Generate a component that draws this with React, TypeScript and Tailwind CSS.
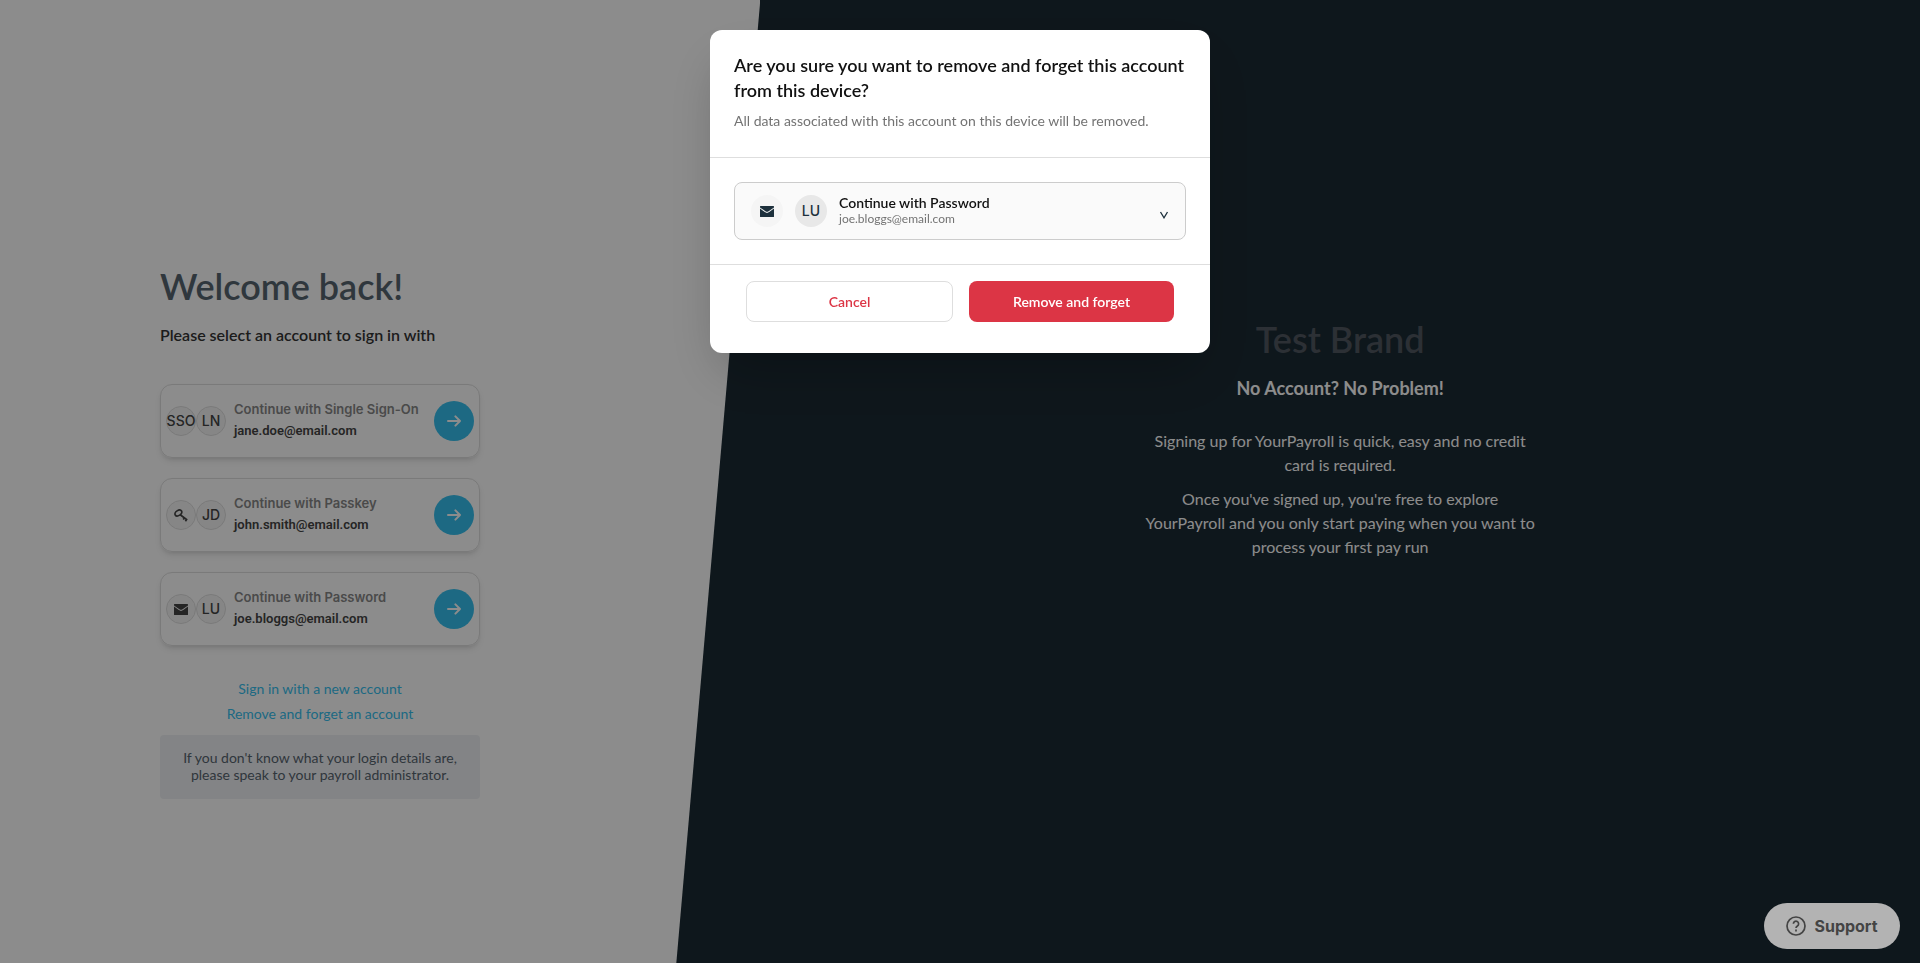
import { useState } from 'react';

const ACCOUNTS = [
    { method: 'Single Sign-On', badge: 'SSO', initials: 'LN', email: 'jane.doe@email.com' },
    { method: 'Passkey', badge: 'key', initials: 'JD', email: 'john.smith@email.com' },
    { method: 'Password', badge: 'mail', initials: 'LU', email: 'joe.bloggs@email.com' },
];

function MailIcon() {
    return (
        <svg viewBox="0 0 14 11" className="w-3.5" fill="currentColor" aria-hidden="true">
            <path d="M.6 0h12.8a.6.6 0 0 1 .6.6v.8L8.6 5.2a2.8 2.8 0 0 1-3.2 0L0 1.4V.6A.6.6 0 0 1 .6 0Z" />
            <path d="m0 2.6 4.8 3.5a3.7 3.7 0 0 0 4.4 0L14 2.6v7.8a.6.6 0 0 1-.6.6H.6a.6.6 0 0 1-.6-.6Z" />
        </svg>
    );
}

function KeyIcon() {
    return (
        <svg viewBox="0 0 14 13" className="w-3.5" fill="none" stroke="currentColor" strokeWidth="1.7" aria-hidden="true">
            <ellipse cx="4.4" cy="4" rx="3.7" ry="2.5" transform="rotate(-32 4.4 4)" />
            <path d="m6.2 5.8 7 5.2M9.2 10.4l1.4-2M11.4 12.2l1.4-2" />
        </svg>
    );
}

function ArrowIcon() {
    return (
        <svg viewBox="0 0 14 12" className="w-3.5" fill="none" stroke="currentColor" strokeWidth="2" strokeLinecap="round" strokeLinejoin="round" aria-hidden="true">
            <path d="M1 6h12M8.4 1.4 13 6l-4.6 4.6" />
        </svg>
    );
}

function Badge({ name }: { name: string }) {
    if (name === 'key') return <KeyIcon />;
    if (name === 'mail') return <MailIcon />;
    return <>{name}</>;
}

function AccountCard({ account }: { account: (typeof ACCOUNTS)[number] }) {
    return (
        <li className="flex h-[74px] items-center rounded-xl border border-[#dedede] px-[5px] font-[Inter] shadow-md">
            <span className="flex size-[30px] shrink-0 items-center justify-center rounded-full border border-[#dedede] bg-[#f5f5f5] text-sm font-medium text-[#444]">
                <Badge name={account.badge} />
            </span>
            <span className="flex size-[30px] shrink-0 items-center justify-center rounded-full border border-[#dedede] bg-[#f5f5f5] text-sm font-medium text-[#444]">
                {account.initials}
            </span>
            <div className="ml-2 flex-1 pb-0.5 font-semibold whitespace-nowrap">
                <p className="text-[13px] leading-[21px] text-[#888]">Continue with {account.method}</p>
                <p className="font-[Roboto] text-[13px] leading-[21px] text-[#444]">{account.email}</p>
            </div>
            <button
                type="button"
                aria-label={`Sign in as ${account.email}`}
                className="flex size-10 shrink-0 items-center justify-center rounded-full bg-[#36c0ee] text-white"
            >
                <ArrowIcon />
            </button>
        </li>
    );
}

function RemoveDialog() {
    const [method, setMethod] = useState('Password');
    const account = ACCOUNTS.find((a) => a.method === method) ?? ACCOUNTS[2];

    return (
        <div className="fixed inset-0 z-10 flex items-start justify-center bg-black/45 pt-[30px]">
            <div
                role="dialog"
                aria-modal="true"
                aria-labelledby="remove-title"
                className="w-full max-w-[500px] rounded-xl bg-white shadow-2xl"
            >
                {/* Header */}
                <div className="border-b border-[#dedede] px-6 pt-[23px] pb-[26px]">
                    <h2 id="remove-title" className="text-lg leading-[25px] font-semibold text-[#111]">
                        Are you sure you want to remove and forget this account from this device?
                    </h2>
                    <p className="mt-2 text-sm leading-5 text-[#737373]">
                        All data associated with this account on this device will be removed.
                    </p>
                </div>

                {/* Account picker */}
                <div className="border-b border-[#dedede] p-6">
                    <div className="flex h-[58px] items-center rounded-lg border border-[#ccc] bg-[#fafafa] px-4 text-[#1d303c]">
                        <span className="flex size-8 items-center justify-center rounded-full bg-[#f5f5f5]">
                            <Badge name={account.badge} />
                        </span>
                        <span className="ml-3 flex size-8 items-center justify-center rounded-full bg-[#e8e8e8] font-[Inter] text-sm font-medium">
                            {account.initials}
                        </span>
                        <div className="ml-3 flex-1">
                            <select
                                aria-label="Account to remove"
                                value={method}
                                onChange={(e) => setMethod(e.target.value)}
                                className="block w-full appearance-none text-sm leading-4 font-semibold text-[#111]"
                            >
                                {ACCOUNTS.map((a) => (
                                    <option key={a.method} value={a.method}>
                                        Continue with {a.method}
                                    </option>
                                ))}
                            </select>
                            <p className="text-xs leading-4 text-[#737373]">{account.email}</p>
                        </div>
                        <svg viewBox="0 0 10 8" className="mt-2 w-2.5" fill="none" stroke="currentColor" strokeWidth="1.3" aria-hidden="true">
                            <path d="M1.5 1 5 6.8 8.5 1" />
                        </svg>
                    </div>
                </div>

                {/* Actions */}
                <div className="flex gap-4 px-9 pt-4 pb-[31px] text-sm font-semibold">
                    <button type="button" className="h-[41px] flex-1 rounded-lg border border-[#dedede] text-[#dc3545]">
                        Cancel
                    </button>
                    <button type="button" className="h-[41px] flex-1 rounded-lg bg-[#dc3545] text-white">
                        Remove and forget
                    </button>
                </div>
            </div>
        </div>
    );
}

export default function App() {
    return (
        <div className="flex min-h-screen bg-[#1b2a33] font-[Lato,sans-serif]">
            <main className="w-[39.6%] shrink-0 bg-white px-40 pt-[261px] pb-10 [clip-path:polygon(0_0,100%_0,calc(100%-84px)_100%,0_100%)]">
                <div className="w-80">
                    <h1 className="text-4xl leading-[50px] font-semibold whitespace-nowrap text-[#57646f]">Welcome back!</h1>
                    <p className="mt-3 text-base leading-6 font-semibold text-[#333]">Please select an account to sign in with</p>

                    <ul className="mt-[37px] flex flex-col gap-5">
                        {ACCOUNTS.map((account) => (
                            <AccountCard key={account.method} account={account} />
                        ))}
                    </ul>

                    <nav className="mt-[30px] flex flex-col items-center text-sm leading-[25px] text-[#36c0ee]">
                        <a href="#new">Sign in with a new account</a>
                        <a href="#remove">Remove and forget an account</a>
                    </nav>
                    <p className="mt-[9px] rounded bg-[#eff1f4] px-5 pt-3.5 pb-4 text-center text-sm leading-[17px] text-[#57646f]">
                        If you don't know what your login details are, please speak to your payroll administrator.
                    </p>
                </div>
            </main>

            <aside className="flex flex-1 flex-col items-center pt-[314px] text-center text-white">
                <h2 className="text-4xl leading-[50px] font-semibold text-[#505861]">Test Brand</h2>
                <h3 className="mt-3 text-lg leading-6 font-bold">No Account? No Problem!</h3>
                <div className="mt-[29px] flex w-[392px] flex-col gap-2.5 text-base leading-6">
                    <p>Signing up for YourPayroll is quick, easy and no credit card is required.</p>
                    <p>
                        Once you've signed up, you're free to explore YourPayroll and you only start paying when you want to
                        process your first pay run
                    </p>
                </div>
            </aside>

            <RemoveDialog />

            <button
                type="button"
                className="fixed right-5 bottom-3.5 z-20 flex h-[46px] w-[136px] items-center justify-center gap-2 rounded-full bg-[#b3b3b3] font-[Inter] text-base font-bold text-[#444]"
            >
                <svg viewBox="0 0 20 20" className="size-5" fill="none" stroke="currentColor" strokeWidth="1.7" aria-hidden="true">
                    <circle cx="10" cy="10" r="9" />
                    <path d="M7.4 7.8a2.6 2.6 0 1 1 4 2.2c-.9.6-1.4 1-1.4 2M10 13.6v1.8" />
                </svg>
                Support
            </button>
        </div>
    );
}
